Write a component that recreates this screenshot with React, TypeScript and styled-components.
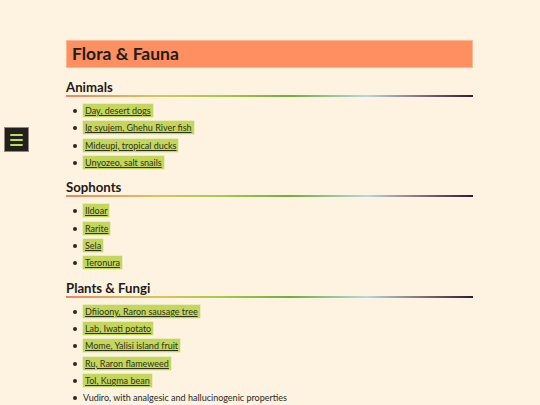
import React from "react";
import styled, { createGlobalStyle } from "styled-components";

const Global = createGlobalStyle`
  html, body { margin: 0; padding: 0; background: #fef3e0; }
  body { font-family: "Lato", "Open Sans", sans-serif; color: #2a2622; }
`;

const Page = styled.div`
  min-height: 405px;
  padding-top: 40px;
  box-sizing: border-box;
`;

const MenuButton = styled.button`
  position: fixed;
  left: 4px;
  top: 127px;
  width: 25px;
  height: 25px;
  padding: 0;
  background: #22201d;
  border: 1px solid #8d8a80;
  display: flex;
  flex-direction: column;
  align-items: center;
  justify-content: center;
  gap: 3px;
`;

const MenuLine = styled.span`
  display: block;
  width: 13px;
  height: 2px;
  background: #c3d55c;
  border-radius: 1px;
`;

const Main = styled.main`
  width: 407px;
  margin: 0 auto 0 66px;
`;

const Title = styled.h1`
  margin: 0;
  height: 28px;
  box-sizing: border-box;
  padding: 0 5px;
  background: #fd8f61;
  border: 1px solid #fbb791;
  font-family: "Lato", "Open Sans", sans-serif;
  font-size: 17.5px;
  font-weight: 700;
  line-height: 26px;
  color: #231c18;
`;

const Heading = styled.h2`
  margin: 11px 0 0;
  font-family: "Lato", "Open Sans", sans-serif;
  font-size: 13.2px;
  font-weight: 700;
  line-height: 16px;
  color: #1f1a16;
  background: linear-gradient(
      90deg,
      #f08462 0%,
      #d9c55a 22%,
      #a7c94a 38%,
      #72ad3e 55%,
      #b8d6e0 74%,
      #8a7a86 86%,
      #2a1d36 100%
    )
    left bottom / 100% 2px no-repeat;
  padding-bottom: 2px;
`;

const List = styled.ul`
  margin: 7px 0 0;
  padding: 0 0 0 17px;
  list-style: none;
  font-size: 9px;
  & + h2 { margin-top: 9.5px; }
`;

const Item = styled.li`
  position: relative;
  line-height: 14px;
  height: 14px;
  margin-top: 3.3px;
  &:first-child { margin-top: 0; }
  &::before {
    content: "";
    position: absolute;
    left: -10px;
    top: 5px;
    width: 4px;
    height: 4px;
    border-radius: 50%;
    background: #2a2622;
  }
`;

const Tag = styled.a`
  background: #c5d65c;
  color: #2f3318;
  text-decoration: underline;
  text-underline-offset: 1px;
  padding: 1px 2px;
  box-shadow: 0 0 0 0.5px #d8e49a;
`;

const sections: { title: string; items: { text: string; link: boolean }[] }[] = [
  {
    title: "Animals",
    items: [
      { text: "Day, desert dogs", link: true },
      { text: "Ig syujem, Ghehu River fish", link: true },
      { text: "Mideupi, tropical ducks", link: true },
      { text: "Unyozeo, salt snails", link: true },
    ],
  },
  {
    title: "Sophonts",
    items: [
      { text: "Ildoar", link: true },
      { text: "Rarite", link: true },
      { text: "Sela", link: true },
      { text: "Teronura", link: true },
    ],
  },
  {
    title: "Plants & Fungi",
    items: [
      { text: "Dfiioony, Raron sausage tree", link: true },
      { text: "Lab, Iwati potato", link: true },
      { text: "Mome, Yalisi island fruit", link: true },
      { text: "Ru, Raron flameweed", link: true },
      { text: "Tol, Kugma bean", link: true },
      { text: "Vudiro, with analgesic and hallucinogenic properties", link: false },
    ],
  },
];

export default function App() {
  return (
    <Page>
      <Global />
      <MenuButton aria-label="menu">
        <MenuLine />
        <MenuLine />
        <MenuLine />
      </MenuButton>
      <Main>
        <Title>Flora &amp; Fauna</Title>
        {sections.map((s) => (
          <React.Fragment key={s.title}>
            <Heading>{s.title}</Heading>
            <List>
              {s.items.map((it) => (
                <Item key={it.text}>
                  {it.link ? <Tag href="#">{it.text}</Tag> : it.text}
                </Item>
              ))}
            </List>
          </React.Fragment>
        ))}
      </Main>
    </Page>
  );
}
